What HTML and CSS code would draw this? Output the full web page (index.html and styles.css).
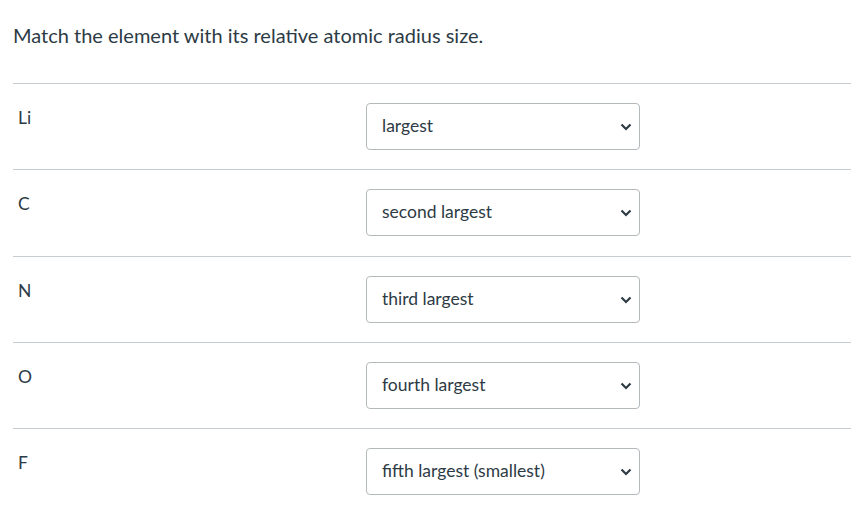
FILE: index.html
```html
<!DOCTYPE html>
<html lang="en">

<head>
  <meta charset="UTF-8">
  <meta name="viewport" content="width=device-width, initial-scale=1.0">
  <title>Matching Question</title>
  <link rel="stylesheet" href="styles.css">
</head>

<body>
  <main class="question">
    <p class="question-text">Match the element with its relative atomic radius size.</p>
    <div class="answers">
      <div class="answer-row">
        <label class="answer-label" for="q-li">Li</label>
        <div class="select-wrap">
          <select id="q-li" class="answer-select">
            <option selected>largest</option>
            <option>second largest</option>
            <option>third largest</option>
            <option>fourth largest</option>
            <option>fifth largest (smallest)</option>
          </select>
          <svg class="chevron" width="12" height="8" viewBox="0 0 12 8"><path d="M1.5 1.5l4.5 4.5 4.5-4.5" fill="none" stroke="#2d3b45" stroke-width="2.2"/></svg>
        </div>
      </div>
      <div class="answer-row">
        <label class="answer-label" for="q-c">C</label>
        <div class="select-wrap">
          <select id="q-c" class="answer-select">
            <option>largest</option>
            <option selected>second largest</option>
            <option>third largest</option>
            <option>fourth largest</option>
            <option>fifth largest (smallest)</option>
          </select>
          <svg class="chevron" width="12" height="8" viewBox="0 0 12 8"><path d="M1.5 1.5l4.5 4.5 4.5-4.5" fill="none" stroke="#2d3b45" stroke-width="2.2"/></svg>
        </div>
      </div>
      <div class="answer-row">
        <label class="answer-label" for="q-n">N</label>
        <div class="select-wrap">
          <select id="q-n" class="answer-select">
            <option>largest</option>
            <option>second largest</option>
            <option selected>third largest</option>
            <option>fourth largest</option>
            <option>fifth largest (smallest)</option>
          </select>
          <svg class="chevron" width="12" height="8" viewBox="0 0 12 8"><path d="M1.5 1.5l4.5 4.5 4.5-4.5" fill="none" stroke="#2d3b45" stroke-width="2.2"/></svg>
        </div>
      </div>
      <div class="answer-row">
        <label class="answer-label" for="q-o">O</label>
        <div class="select-wrap">
          <select id="q-o" class="answer-select">
            <option>largest</option>
            <option>second largest</option>
            <option>third largest</option>
            <option selected>fourth largest</option>
            <option>fifth largest (smallest)</option>
          </select>
          <svg class="chevron" width="12" height="8" viewBox="0 0 12 8"><path d="M1.5 1.5l4.5 4.5 4.5-4.5" fill="none" stroke="#2d3b45" stroke-width="2.2"/></svg>
        </div>
      </div>
      <div class="answer-row">
        <label class="answer-label" for="q-f">F</label>
        <div class="select-wrap">
          <select id="q-f" class="answer-select">
            <option>largest</option>
            <option>second largest</option>
            <option>third largest</option>
            <option>fourth largest</option>
            <option selected>fifth largest (smallest)</option>
          </select>
          <svg class="chevron" width="12" height="8" viewBox="0 0 12 8"><path d="M1.5 1.5l4.5 4.5 4.5-4.5" fill="none" stroke="#2d3b45" stroke-width="2.2"/></svg>
        </div>
      </div>
    </div>
  </main>
</body>

</html>
```

FILE: styles.css
```css
body {
  margin: 0;
  padding: 0;
  background: #fff;
  color: #2d3b45;
  font-family: Lato, "Liberation Sans", sans-serif;
}

.question {
  padding-left: 13px;
}

.question-text {
  margin: 20px 0 33px;
  font-size: 20px;
  line-height: 30px;
}

.answer-row {
  display: grid;
  grid-template-columns: 353px 274px;
  align-items: start;
  height: 86.3px;
  box-sizing: border-box;
  padding-top: 19px;
  border-top: 1px solid #c7cdd1;
}

.answer-label {
  padding: 3px 0 0 5px;
  font-size: 17.5px;
  line-height: 24px;
}

.select-wrap {
  position: relative;
}

.answer-select {
  appearance: none;
  -webkit-appearance: none;
  display: block;
  width: 100%;
  height: 47px;
  margin: 0;
  padding: 0 30px 2px 15px;
  border: 1px solid #b4b9bc;
  border-radius: 4px;
  background: #fff;
  color: #2d3b45;
  font-family: Lato, "Liberation Sans", sans-serif;
  font-size: 17.5px;
}

.chevron {
  position: absolute;
  right: 8px;
  top: 20px;
  pointer-events: none;
}
```
